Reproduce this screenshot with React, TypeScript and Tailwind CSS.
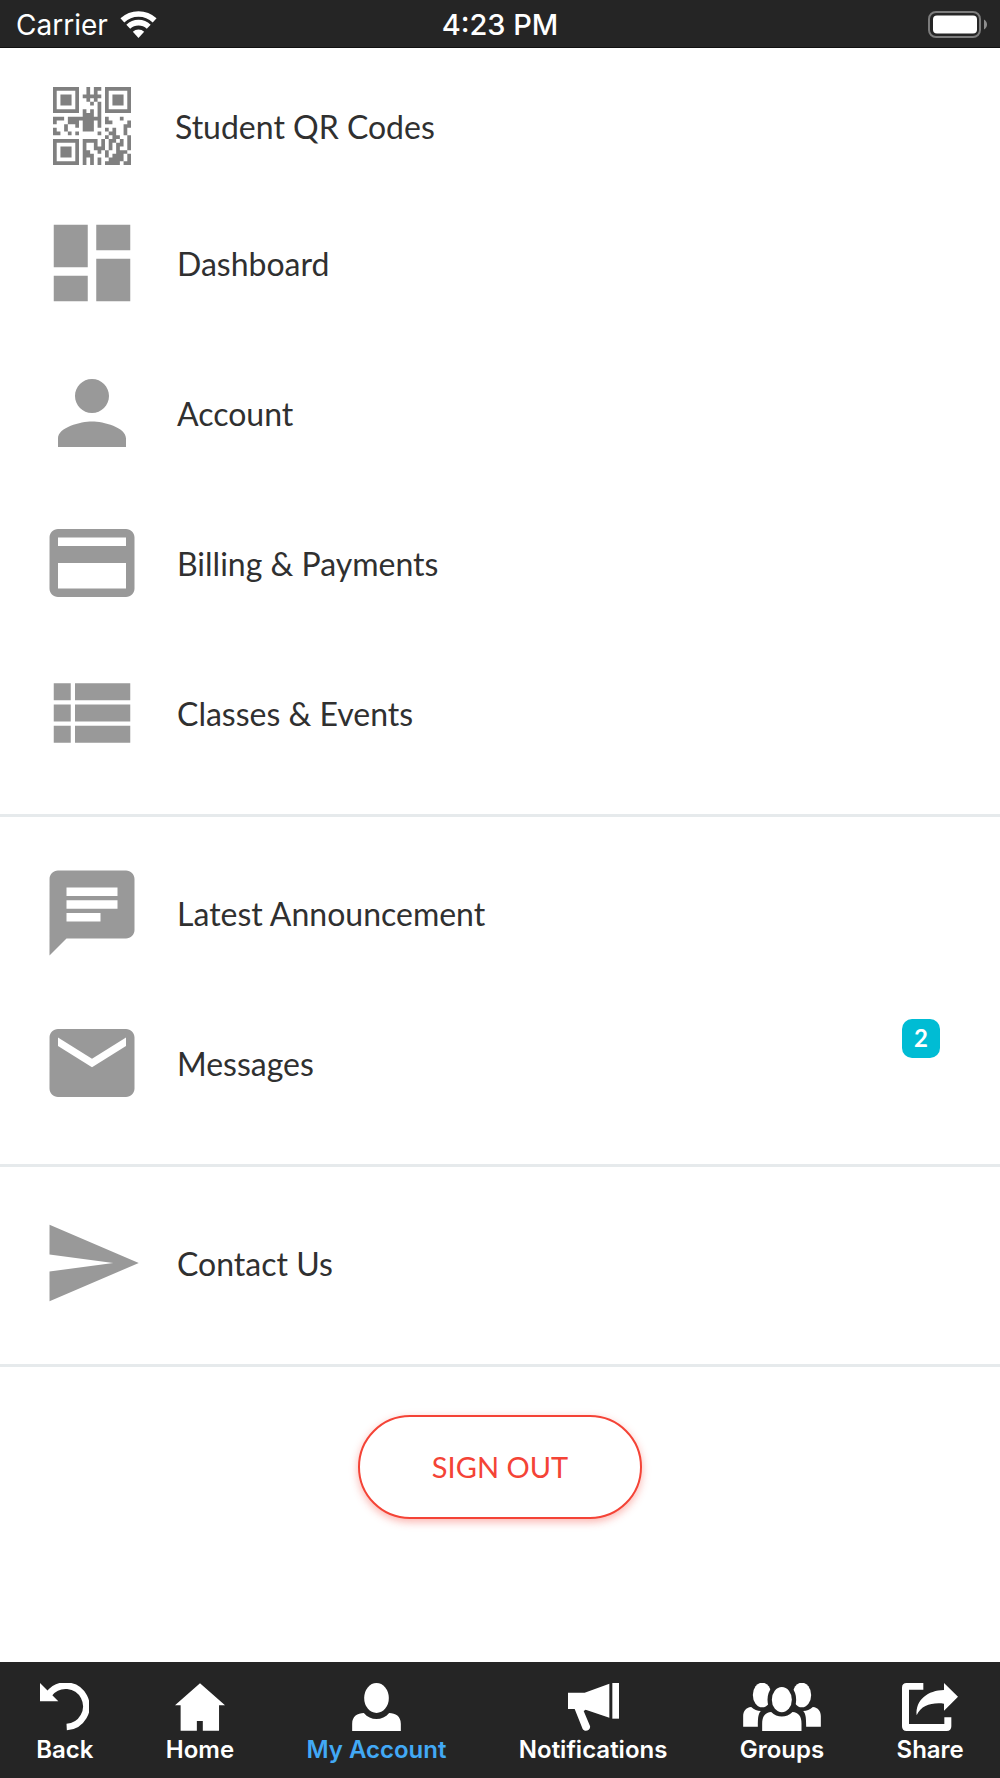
import type { ReactNode } from 'react';
import { MdChat, MdDashboard, MdEmail, MdPayment, MdPerson, MdSend, MdViewList } from 'react-icons/md';

const QR_ROWS = [
  '#######..#.##.#######',
  '#.....#..#.#..#.....#',
  '#.###.#.#####.#.###.#',
  '#.###.#..#.#..#.###.#',
  '#.###.#...#.#.#.###.#',
  '#.....#.....#.#.....#',
  '#######.#.#.#.#######',
  '........###.#........',
  '###.#########.#...#..',
  '#...###.###.#.##....#',
  '...#..#.###.#......##',
  '#..#....###...#.#..#.',
  '##..#.#.....#..##..#.',
  '..............#.##..#',
  '#######.####.#.##.#.#',
  '#.....#.#..#.#.#.##.#',
  '#.###.#.#..###.#.#..#',
  '#.###.#.##..#.#..###.',
  '#.###.#.###...#.###.#',
  '#.....#.#.#.#..####.#',
  '#######.#.#.#.####.##',
];

// one path for all the modules, so no seams show between them
const QR_PATH = QR_ROWS.flatMap((row, y) =>
  row.split('').map((cell, x) => (cell === '#' ? `M${x} ${y}h1v1h-1z` : '')),
).join('');

function QrIcon() {
  return (
    <svg viewBox="0 0 21 21" className="size-[78px]" fill="#808080" aria-hidden="true">
      <path d={QR_PATH} />
    </svg>
  );
}

function WifiIcon() {
  return (
    <svg viewBox="0 0 110 81" className="h-[27px] w-[37px]" fill="none" stroke="white" strokeWidth="17" aria-hidden="true">
      <path d="M6.6 28.1A71 71 0 0 1 103.4 28.1" />
      <path d="M24.3 47.1A45 45 0 0 1 85.7 47.1" />
      <path d="M55 81L38 62.5A25 25 0 0 1 72 62.5Z" fill="white" stroke="none" />
    </svg>
  );
}

function BatteryIcon() {
  return (
    <svg viewBox="0 0 60 27" className="h-[27px] w-[60px]" aria-hidden="true">
      <rect x="1" y="1" width="51" height="25" rx="7" fill="none" stroke="#7c7c7c" strokeWidth="2" />
      <rect x="5" y="4.5" width="44" height="18" rx="4" fill="white" />
      <path d="M56 8.500C60 11 60 16 56 18.500Z" fill="#8e8e8e" />
    </svg>
  );
}

function BackIcon() {
  return (
    <svg viewBox="0 0 147 144" className="h-12 w-[49px]" aria-hidden="true">
      <path d="M0 0V55H55Z" fill="currentColor" />
      <path d="M28 32A62 62 0 1 1 80 132" fill="none" stroke="currentColor" strokeWidth="20" />
    </svg>
  );
}

function HomeIcon() {
  return (
    <svg viewBox="0 0 151 144" className="h-12 w-[50px]" fill="currentColor" aria-hidden="true">
      <path d="M75.500 0L151 67H133V144H84V114H66V144H17V67H0Z" />
    </svg>
  );
}

function ProfileIcon() {
  return (
    <svg viewBox="0 0 146 144" className="h-12 w-[49px]" fill="currentColor" aria-hidden="true">
      <ellipse cx="73" cy="45" rx="37" ry="45" />
      <path d="M0 144V122C0 100 16 90 35 90C55 114 91 114 111 90C130 90 146 100 146 122V144Z" />
    </svg>
  );
}

function BullhornIcon() {
  return (
    <svg viewBox="0 0 153 144" className="h-12 w-[51px]" fill="currentColor" aria-hidden="true">
      <path d="M133 0H153V107H133Z" />
      <path d="M0 29H50L124 2V104L53 80L47 84L66 129C69 141 51 149 44 138L20 78H0Z" />
    </svg>
  );
}

function GroupsIcon() {
  return (
    <svg viewBox="0 0 233 144" className="h-12 w-[78px]" fill="white" aria-hidden="true">
      <ellipse cx="57" cy="36" rx="28" ry="37" />
      <ellipse cx="176" cy="36" rx="28" ry="37" />
      <path d="M0 131V100C0 84 8 74 24 72C33 81 42 83 53 84C46 92 44 100 44 131Z" />
      <path d="M233 131V100C233 84 225 74 209 72C200 81 191 83 180 84C187 92 189 100 189 131Z" />
      <ellipse cx="116" cy="50" rx="36" ry="44" fill="none" stroke="#252525" strokeWidth="14" />
      <ellipse cx="116" cy="50" rx="30" ry="38" />
      <path d="M57 144V122C57 100 66 88 84 87C102 105 130 105 148 87C166 88 175 100 175 122V144Z" />
    </svg>
  );
}

function ShareIcon() {
  return (
    <svg viewBox="0 0 168 144" className="h-12 w-14" fill="currentColor" aria-hidden="true">
      <path d="M64 0H14Q0 0 0 14V130Q0 144 14 144H134Q148 144 148 130V103H127V123H21V20H64Z" />
      <path d="M44 97C40 50 78 22 126 21V0L168 41L126 83V62C90 58 58 66 44 97Z" />
    </svg>
  );
}

type MenuItemProps = { icon: ReactNode; label: string; badge?: number };

function MenuItem({ icon, label, badge }: MenuItemProps) {
  return (
    <li>
      <a href="#" className="flex h-[150px] items-center gap-[34px] pr-[60px] pl-[41px]">
        <span className="text-[102px] text-[#999999]">{icon}</span>
        <span className="pt-[2px]">{label}</span>
        {badge !== undefined && (
          <span className="mt-[31px] ml-auto flex h-[39px] w-[38px] items-center justify-center self-start rounded-[10px] bg-[#00bcd4] pb-[2px] text-2xl font-bold text-white">
            {badge}
          </span>
        )}
      </a>
    </li>
  );
}

const TABS = [
  { label: 'Back', icon: <BackIcon /> },
  { label: 'Home', icon: <HomeIcon /> },
  { label: 'My Account', icon: <ProfileIcon />, active: true },
  { label: 'Notifications', icon: <BullhornIcon /> },
  { label: 'Groups', icon: <GroupsIcon /> },
  { label: 'Share', icon: <ShareIcon /> },
];

export default function App() {
  return (
    <div className="flex min-h-screen flex-col bg-white font-['Lato',sans-serif] text-[32px] text-[#303030]">
      <header className="grid h-12 grid-cols-3 items-center border-b border-[#111111] bg-[#252525] px-3 pt-[2px] font-['Inter',sans-serif] text-[28px] text-white">
        <div className="flex items-center gap-3 pl-1">
          <span>Carrier</span>
          <WifiIcon />
        </div>
        <span className="text-center text-[29px] font-medium">4:23 PM</span>
        <div className="flex justify-end">
          <BatteryIcon />
        </div>
      </header>

      <main>
        <ul className="border-b-3 border-[#e6eaec] pt-4 pb-[26px]">
          <li>
            <a href="#" className="flex h-[124px] items-center gap-8 pl-[41px]">
              <span className="flex w-[102px] justify-center">
                <QrIcon />
              </span>
              <span className="pt-[2px]">Student QR Codes</span>
            </a>
          </li>
          <MenuItem icon={<MdDashboard />} label="Dashboard" />
          <MenuItem icon={<MdPerson />} label="Account" />
          <MenuItem icon={<MdPayment />} label="Billing &amp; Payments" />
          <MenuItem icon={<MdViewList />} label="Classes &amp; Events" />
        </ul>

        <ul className="border-b-3 border-[#e6eaec] pt-[21px] pb-[26px]">
          <MenuItem icon={<MdChat />} label="Latest Announcement" />
          <MenuItem icon={<MdEmail />} label="Messages" badge={2} />
        </ul>

        <ul className="border-b-3 border-[#e6eaec] pt-[21px] pb-[26px]">
          <MenuItem icon={<MdSend />} label="Contact Us" />
        </ul>

        <div className="flex justify-center py-12">
          <button
            type="button"
            className="h-[104px] w-[284px] rounded-full border-2 border-[#f44336] bg-white text-[29px] text-[#f44336] shadow-[0_3px_8px_rgba(244,67,54,0.4)]"
          >
            SIGN OUT
          </button>
        </div>
      </main>

      <nav className="mt-auto flex h-[116px] justify-around bg-[#252525] pt-[21px] font-['Inter',sans-serif] text-2xl font-semibold text-white">
        {TABS.map((tab) => (
          <a
            key={tab.label}
            href="#"
            aria-current={tab.active ? 'page' : undefined}
            className="flex flex-col items-center gap-[3px]"
          >
            {tab.icon}
            <span className={tab.active ? 'text-[#42a9f5]' : ''}>{tab.label}</span>
          </a>
        ))}
      </nav>
    </div>
  );
}
